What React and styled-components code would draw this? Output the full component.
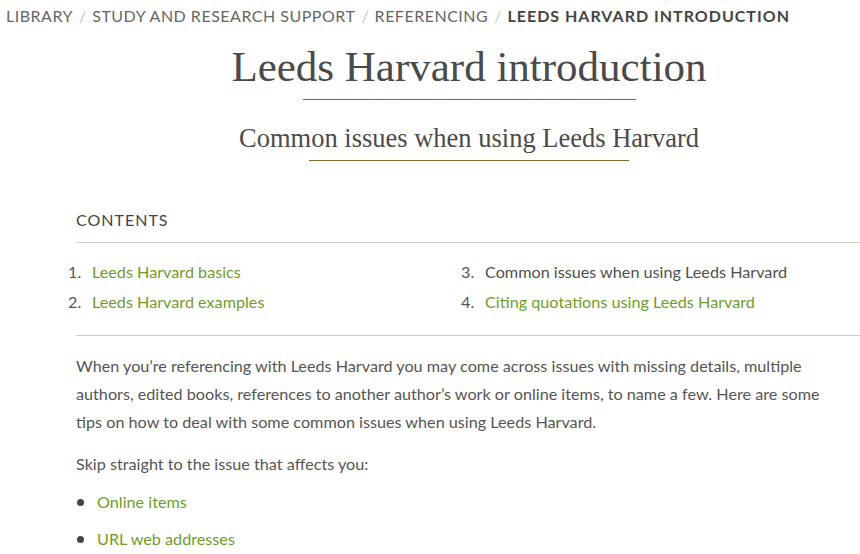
import React from 'react';
import styled, { createGlobalStyle } from 'styled-components';

const GlobalStyle = createGlobalStyle`
  html, body {
    margin: 0;
    padding: 0;
    background: #fff;
  }
  body {
    font-family: Lato, "Open Sans", sans-serif;
    color: #555;
    overflow: hidden;
  }
`;

const Page = styled.div`
  width: 860px;
  height: 554px;
  overflow: hidden;
`;

const Breadcrumb = styled.nav`
  display: flex;
  align-items: center;
  padding: 5px 0 0 6px;
  font-size: 16px;
  line-height: 22px;
  text-transform: uppercase;
  white-space: nowrap;
`;

const Crumb = styled.span`
  color: ${p => (p.current ? '#444' : '#666')};
  font-weight: ${p => (p.current ? 700 : 400)};
  letter-spacing: ${p => (p.current ? '1px' : '0.5px')};
`;

const Sep = styled.span`
  color: #c8c8c8;
  margin: 0 6px;
`;

const Main = styled.main`
  width: 786px;
  margin-left: 76px;
`;

const Title = styled.h1`
  margin: 14px 0 0;
  text-align: center;
  font-family: "Liberation Serif", "DejaVu Serif", serif;
  font-weight: 400;
  font-size: 43px;
  line-height: 52px;
  color: #4a4a4a;
`;

const Rule = styled.div`
  width: ${p => p.width}px;
  height: 1px;
  background: #8b6a2e;
  margin: ${p => p.margin};
`;

const Subtitle = styled.h2`
  margin: 0;
  text-align: center;
  font-family: "Liberation Serif", "DejaVu Serif", serif;
  font-weight: 400;
  font-size: 26.5px;
  line-height: 34px;
  color: #4a4a4a;
`;

const Contents = styled.section`
  margin-top: 48px;
`;

const ContentsHeading = styled.div`
  font-size: 16px;
  letter-spacing: 1px;
  color: #444;
  line-height: 22px;
  padding-bottom: 11px;
  border-bottom: 1px solid #d6ccc4;
`;

const ContentsList = styled.ol`
  list-style: none;
  margin: 0;
  padding: 14px 0 18px;
  display: grid;
  grid-template-columns: 393px 393px;
  grid-auto-flow: column;
  grid-template-rows: repeat(2, 30px);
  border-bottom: 1px solid #d6ccc4;
`;

const ContentsItem = styled.li`
  display: flex;
  align-items: center;
  font-size: 16.2px;
  line-height: 30px;
  color: #555;
`;

const Num = styled.span`
  width: 24px;
  margin-left: -8px;
  color: #555;
`;

const Link = styled.a`
  color: #6f9c2a;
  text-decoration: none;
`;

const Plain = styled.span`
  color: #4f4f4f;
`;

const Para = styled.p`
  width: 770px;
  margin: ${p => p.margin || '0'};
  font-size: 16.2px;
  line-height: 28px;
  color: #555;
`;

const Bullets = styled.ul`
  margin: 13px 0 0;
  padding: 0;
  list-style: none;
  display: flex;
  flex-direction: column;
  gap: 15px;
`;

const Bullet = styled.li`
  display: flex;
  align-items: center;
  font-size: 16.2px;
  line-height: 22px;

  &::before {
    content: '';
    width: 7px;
    height: 7px;
    border-radius: 50%;
    background: #444;
    margin: 0 13px 0 1px;
  }
`;

const contents = [
  { n: 1, label: 'Leeds Harvard basics', link: true },
  { n: 2, label: 'Leeds Harvard examples', link: true },
  { n: 3, label: 'Common issues when using Leeds Harvard', link: false },
  { n: 4, label: 'Citing quotations using Leeds Harvard', link: true },
];

export default function App() {
  return (
    <Page>
      <GlobalStyle />
      <Breadcrumb>
        <Crumb>Library</Crumb>
        <Sep>/</Sep>
        <Crumb>Study and research support</Crumb>
        <Sep>/</Sep>
        <Crumb>Referencing</Crumb>
        <Sep>/</Sep>
        <Crumb current>Leeds Harvard introduction</Crumb>
      </Breadcrumb>
      <Main>
        <Title>Leeds Harvard introduction</Title>
        <Rule width={333} margin="6px auto 21px" />
        <Subtitle>Common issues when using Leeds Harvard</Subtitle>
        <Rule width={320} margin="5px auto 0" />
        <Contents>
          <ContentsHeading>CONTENTS</ContentsHeading>
          <ContentsList>
            {contents.map(item => (
              <ContentsItem key={item.n}>
                <Num>{item.n}.</Num>
                {item.link ? <Link href="#">{item.label}</Link> : <Plain>{item.label}</Plain>}
              </ContentsItem>
            ))}
          </ContentsList>
        </Contents>
        <Para margin="16px 0 0">
          When you’re referencing with Leeds Harvard you may come across issues with missing details, multiple
          authors, edited books, references to another author’s work or online items, to name a few. Here are some
          tips on how to deal with some common issues when using Leeds Harvard.
        </Para>
        <Para margin="14px 0 0">Skip straight to the issue that affects you:</Para>
        <Bullets>
          <Bullet><Link href="#">Online items</Link></Bullet>
          <Bullet><Link href="#">URL web addresses</Link></Bullet>
        </Bullets>
      </Main>
    </Page>
  );
}
